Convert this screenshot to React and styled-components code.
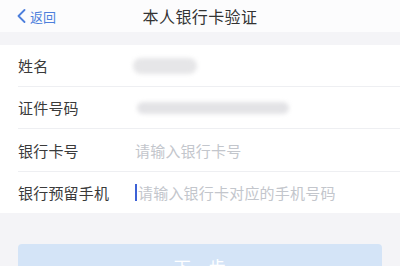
import styled, { createGlobalStyle } from 'styled-components';

const GlobalStyle = createGlobalStyle`
    html, body {
        margin: 0;
        padding: 0;
        background: #f4f4f7;
        font-family: "Noto Sans CJK SC", "Noto Sans", sans-serif;
        overflow: hidden;
    }
`;

const Page = styled.div`
    width: 400px;
    height: 266px;
    background: #f4f4f7;
    overflow: hidden;
`;

const Header = styled.div`
    height: 32px;
    background: #fcfcfd;
    display: grid;
    grid-template-columns: 1fr auto 1fr;
    align-items: center;
    padding: 0 16px;
`;

const Back = styled.div`
    display: flex;
    align-items: center;
    gap: 3px;
    color: #4d7fdc;
    font-size: 13px;
`;

const Title = styled.div`
    font-size: 16px;
    color: #333;
    letter-spacing: 0.4px;
`;

const Card = styled.div`
    margin-top: 13px;
    background: #fff;
    padding-left: 18px;
`;

const Row = styled.div`
    height: ${(p) => p.$h || 42}px;
    display: flex;
    align-items: center;
    border-bottom: ${(p) => (p.$last ? 'none' : '1px solid #eeeff2')};
    box-sizing: border-box;
`;

const Label = styled.div`
    width: 117px;
    font-size: 15px;
    color: #3a3a3a;
    letter-spacing: 0.2px;
    flex-shrink: 0;
`;

const Placeholder = styled.div`
    font-size: 15px;
    color: #c3c6cc;
    letter-spacing: 0.2px;
    display: flex;
    align-items: center;
`;

const Caret = styled.span`
    width: 2px;
    height: 17px;
    background: #3d62d6;
    margin-right: 1px;
`;

const Blur = styled.div`
    width: ${(p) => p.$w}px;
    height: ${(p) => p.$hh}px;
    background: ${(p) => p.$bg};
    filter: blur(2px);
    border-radius: 8px;
    margin-left: ${(p) => p.$ml || 0}px;
`;

const Footer = styled.div`
    padding: 31px 18px 0;
`;

const Button = styled.div`
    height: 44px;
    border-radius: 4px;
    background: #d4e4f7;
    color: #fff;
    font-size: 17px;
    display: flex;
    align-items: center;
    justify-content: center;
    letter-spacing: 0.5px;
`;

export default function App() {
    return (
        <Page>
            <GlobalStyle />
            <Header>
                <Back>
                    <svg width="11" height="14" viewBox="0 0 11 14">
                        <path d="M8.5 1 L2.5 7 L8.5 13" fill="none" stroke="#4d7fdc" strokeWidth="1.8" strokeLinecap="round" strokeLinejoin="round" />
                    </svg>
                    返回
                </Back>
                <Title>本人银行卡验证</Title>
                <div />
            </Header>
            <Card>
                <Row>
                    <Label>姓名</Label>
                    <Blur $w={64} $hh={16} $bg="#e6e6e8" $ml={-2} />
                </Row>
                <Row>
                    <Label>证件号码</Label>
                    <Blur $w={152} $hh={12} $bg="#e3e3e6" $ml={2} />
                </Row>
                <Row $h={43}>
                    <Label>银行卡号</Label>
                    <Placeholder>请输入银行卡号</Placeholder>
                </Row>
                <Row $h={41} $last>
                    <Label>银行预留手机</Label>
                    <Placeholder>
                        <Caret />
                        请输入银行卡对应的手机号码
                    </Placeholder>
                </Row>
            </Card>
            <Footer>
                <Button>下一步</Button>
            </Footer>
        </Page>
    );
}
